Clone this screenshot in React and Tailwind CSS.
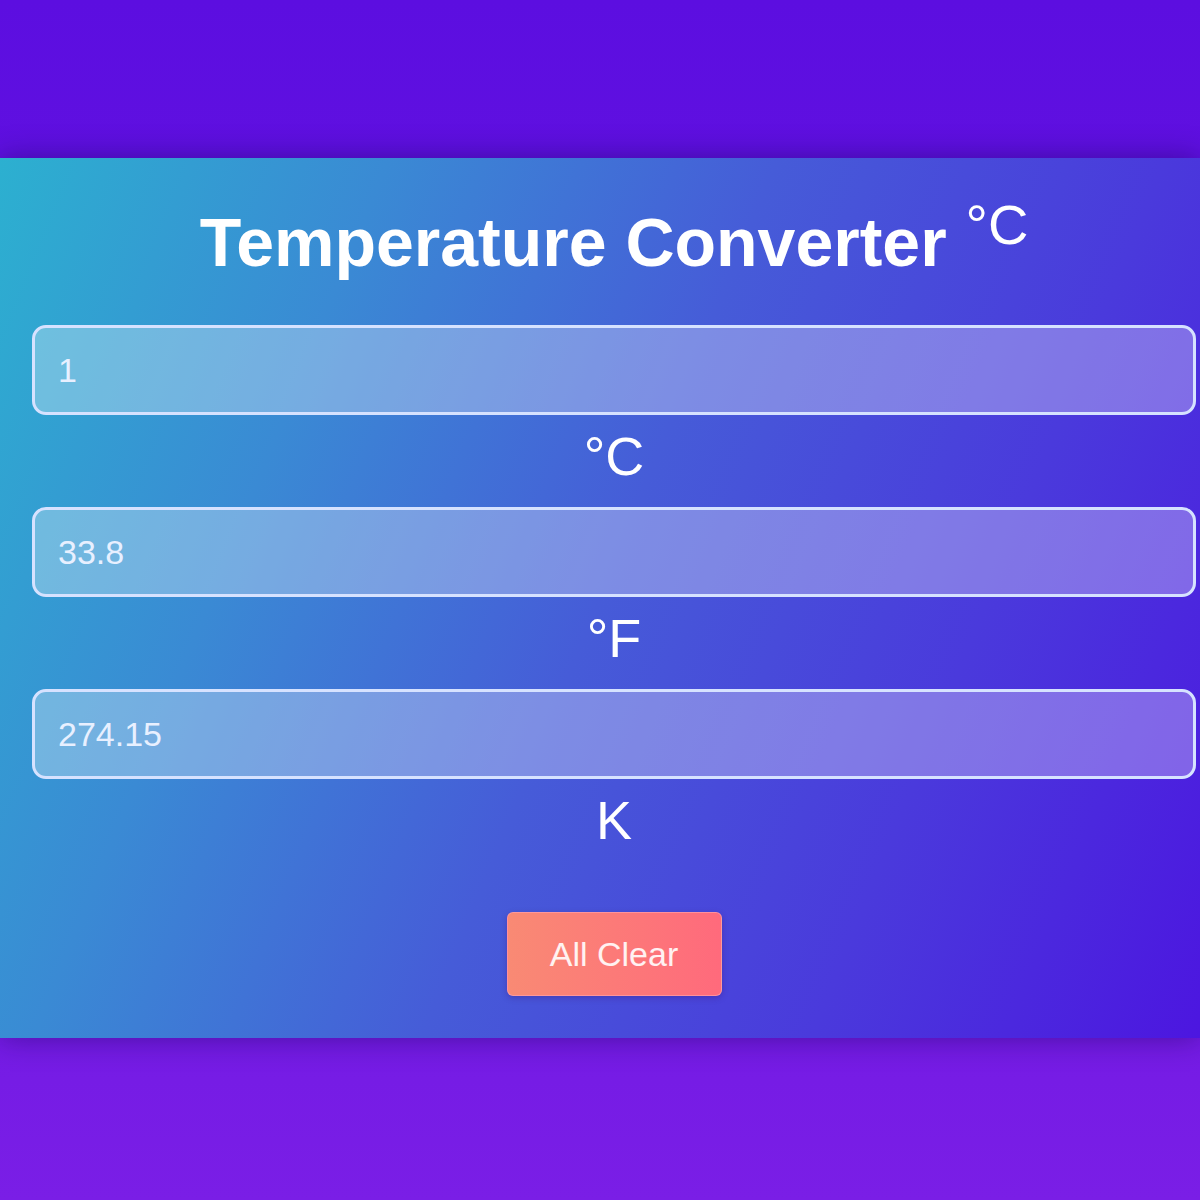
import React, { useState } from 'react';

const FONT = { fontFamily: "'Liberation Sans', Arial, sans-serif" };

export default function App() {
  const [c, setC] = useState('1');
  const f = c === '' ? '' : String(Math.round((parseFloat(c) * 9 / 5 + 32) * 100) / 100);
  const k = c === '' ? '' : String(Math.round((parseFloat(c) + 273.15) * 100) / 100);

  const fields = [
    { value: c, unit: '°C', onChange: e => setC(e.target.value) },
    { value: f, unit: '°F', onChange: e => setC(String((parseFloat(e.target.value) - 32) * 5 / 9)) },
    { value: k, unit: 'K', onChange: e => setC(String(parseFloat(e.target.value) - 273.15)) },
  ];

  return (
    <div className="w-full h-[1200px] pt-[158px] bg-[linear-gradient(180deg,#5c0ee0_0%,#6a16e2_60%,#7a1ee6_100%)]" style={FONT}>
      {/* converter card */}
      <div className="w-full h-[880px] pt-[45px] pl-[32px] pr-[4px] flex flex-col items-center shadow-[0_0_28px_rgba(20,0,80,0.45)] bg-[linear-gradient(112deg,#2cb0d0_0%,#3a8ad4_25%,#465cd8_50%,#4a3adc_75%,#4c16e0_100%)]">
        <h1 className="text-[68px] leading-[78px] font-bold text-white text-center">
          Temperature Converter <sup className="text-[56px] font-normal -top-[22px]">°C</sup>
        </h1>

        <div className="w-full mt-[44px] flex flex-col">
          {fields.map((fl, i) => (
            <div key={fl.unit} className="flex flex-col items-center">
              <input
                type="text"
                value={fl.value}
                onChange={fl.onChange}
                className="w-full h-[90px] rounded-[14px] border-[3px] border-[#d6e2ff] bg-white/30 pl-[23px] text-[34px] text-[#e8f0ff] outline-none"
                style={FONT}
              />
              <div className={`mt-[10px] h-[62px] leading-[62px] text-[54px] text-white ${i < 2 ? 'mb-[20px]' : ''}`}>
                {fl.unit}
              </div>
            </div>
          ))}
        </div>

        <button
          onClick={() => setC('')}
          className="mt-[61px] w-[215px] h-[84px] rounded-md border border-[#ffa0aa]/70 bg-[linear-gradient(90deg,#f98a74,#ff6a7c)] text-[34px] text-white/90 shadow-[0_2px_6px_rgba(60,0,80,0.25)]"
          style={FONT}
        >
          All Clear
        </button>
      </div>
    </div>
  );
}
